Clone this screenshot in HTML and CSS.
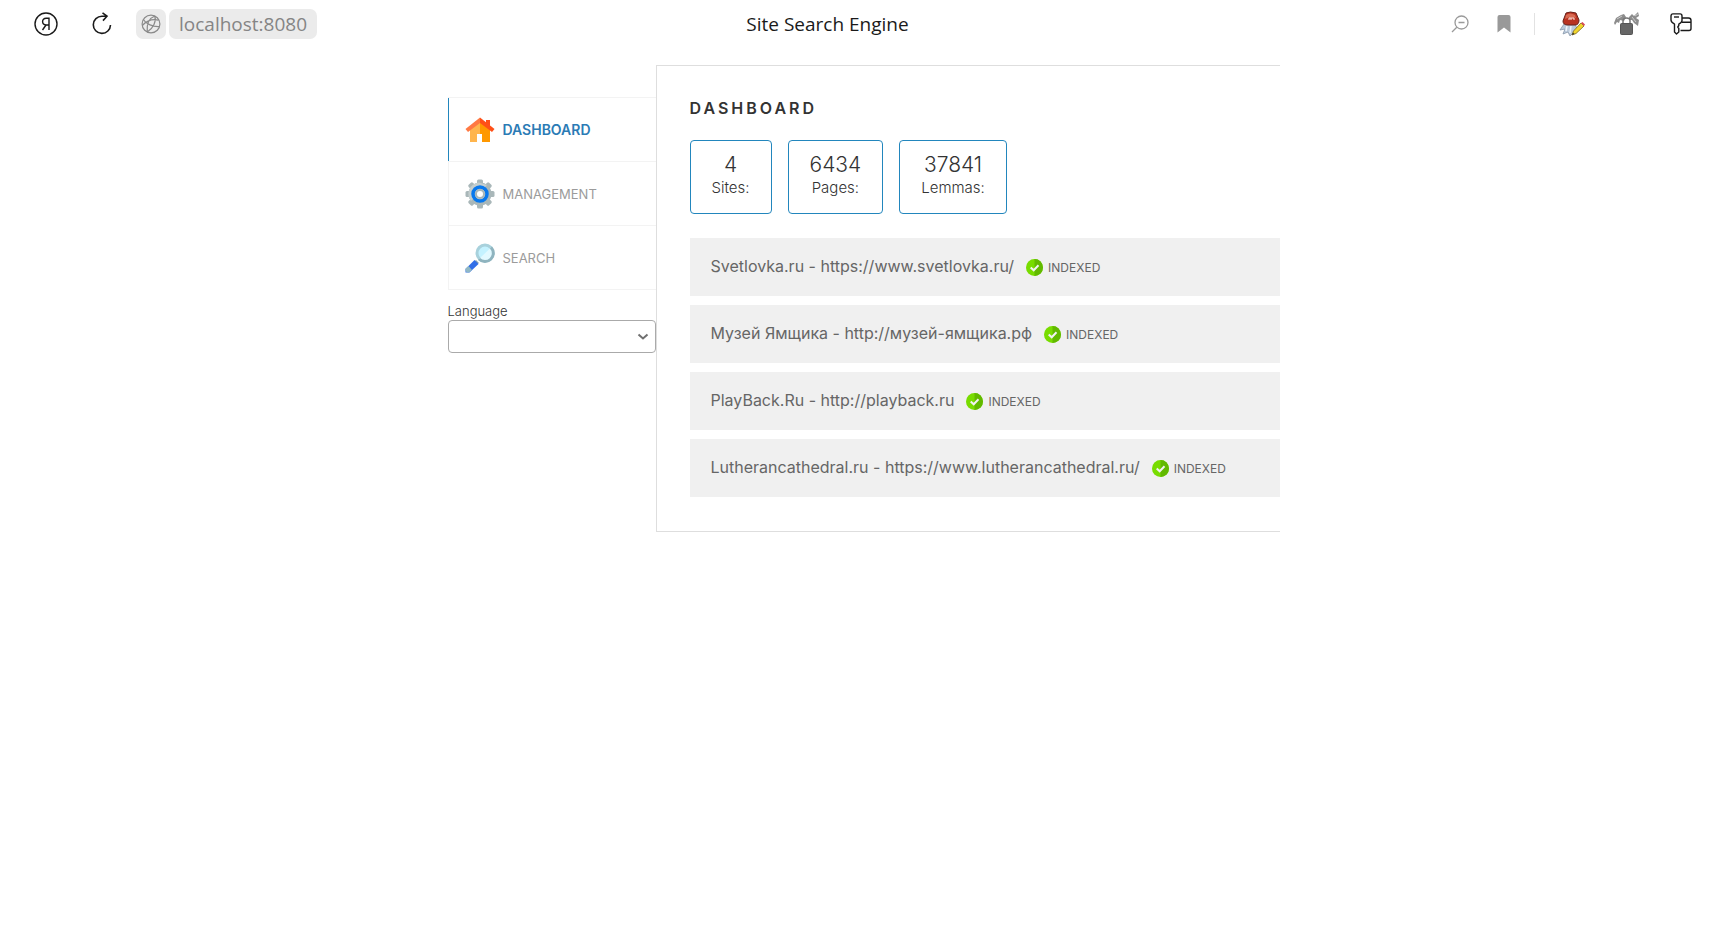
FILE: index.html
```html
<!DOCTYPE html>
<html lang="en">
<head>
<meta charset="utf-8">
<title>Site Search Engine</title>
<link rel="stylesheet" href="styles.css">
</head>
<body>
<header class="bar">
  <div class="bar-side">
    <button class="tool" aria-label="Home">
      <svg width="24" height="24" viewBox="0 0 24 24" fill="none" stroke="#1a1a1a" stroke-width="1.4"><circle cx="12" cy="12" r="11"/><path d="M15 18V6.200H12.200C9.800 6.200 8.600 7.700 8.600 9.600C8.600 11.600 9.900 13 12.200 13H15M12 13L8.500 18"/></svg>
    </button>
    <button class="tool tool-reload" aria-label="Reload">
      <svg width="20" height="24" viewBox="0 0 20 24" fill="none" stroke="#1a1a1a" stroke-width="1.600"><path d="M14.500 4.200H10A8.600 8.600 0 1 0 18.500 13M10.500 .8L15 4.200L11 8.600"/></svg>
    </button>
    <div class="address">
      <button class="site-info" aria-label="Site information">
        <svg width="20" height="20" viewBox="0 0 20 20" fill="none" stroke="#8a8a8a" stroke-width="1.200"><circle cx="10" cy="10" r="8.900"/><path d="M13.800 2C8.500 4 5.500 10 6.200 18M13.800 2C15.500 7 12.500 14.500 6.200 18M2.300 5.500C5 10 12 13 18.500 12.500M1.300 11.500C6 6.500 12.500 5 17.500 6.200"/></svg>
      </button>
      <button class="url">localhost:8080</button>
    </div>
  </div>
  <div class="bar-title">Site Search Engine</div>
  <div class="bar-side bar-right">
    <button class="tool" aria-label="Zoom out">
      <svg width="18" height="18" viewBox="0 0 18 18" fill="none" stroke="#9a9a9a" stroke-width="1.300"><circle cx="10.500" cy="7.500" r="6.500"/><path d="M1 17L5.800 12.200M7.500 7.500H13.500"/></svg>
    </button>
    <button class="tool tool-mark" aria-label="Bookmark">
      <svg width="14" height="18" viewBox="0 0 14 18" fill="#999"><path d="M2.500 0H11.500Q13.500 0 13.500 2V17.500L7 12.500L.5 17.500V2Q.5 0 2.500 0Z"/></svg>
    </button>
    <span class="divider"></span>
    <button class="tool tool-ext" aria-label="Editor extension">
      <svg width="26" height="26" viewBox="0 0 26 26"><path d="M5 13L1 19L6 18L4 23L9 21L11 25L15 21L19 20L16 13Z" fill="#bccbdc" stroke="#8595aa" stroke-width=".8"/><path d="M8 15L7 20M12 15L11 22" stroke="#eef4fa" stroke-width="1.500"/><path d="M7 2Q11 0 17 2L20 9Q20 14 16 14H9Q4 14 4 10Z" fill="#b83322" stroke="#67221b"/><path d="M7 4Q11 1 16 4L17 7Q11 5 6 8Z" fill="#d76a52"/><path d="M10 9V7H15V9M12 7V9" stroke="#ffe4dc" fill="none"/><path d="M13 24L14.500 20L22 12L25 15L17 22.500Z" fill="#f2d62b" stroke="#7b661b" stroke-width=".8"/><path d="M22 12L23.500 11L26 13.500L25 15Z" fill="#db4957"/><path d="M13 24L14 21.500L15.500 23Z" fill="#333"/></svg>
    </button>
    <button class="tool tool-lock" aria-label="Lock extension">
      <svg width="26" height="24" viewBox="0 0 26 24"><path d="M0 11L2 6L7 3L10 2L12 5L10 9L6 8L5 11L3 10L1 13ZM15 5L18 2L20 4L24 0L25 4L22 6L25 8L24 14L20 11L18 8L15 8Z" fill="#8d8d8d"/><path d="M3 7L8 4M18 5L22 10M21 4L24 2" stroke="#ccc"/><path d="M9 12V9Q9 6 12.500 6Q16 6 16 9V12" fill="none" stroke="#777" stroke-width="1.500"/><rect x="6.500" y="11.500" width="12" height="11" rx="1" fill="#666" stroke="#555"/></svg>
    </button>
    <button class="tool tool-key" aria-label="Passwords">
      <svg width="22" height="22" viewBox="0 0 22 22" fill="none" stroke="#1a1a1a" stroke-width="1.400" stroke-linejoin="round"><path d="M12 5H18.500Q21 5 21 7.500V15.500Q21 17.500 19 17.500H10.500M12 9.200H21"/><path d="M3 .9H10Q12 .9 12 3V7.500Q12 9.500 8.800 11.200V12.500L7.800 14L8.800 15.500V19L6.500 21L4.500 19V11.200Q1 9 1 7V3Q1 .9 3 .9Z" fill="#fff"/><path d="M4 4H9"/></svg>
    </button>
  </div>
</header>

<div class="page">
  <aside class="sidebar">
    <nav class="menu">
      <a class="menu-item menu-item-active" href="#dashboard">
        <svg width="30" height="30" viewBox="0 0 30 30"><path d="M5 14V27H12V19H15V6Z" fill="#ffb54d"/><path d="M15 6V19H17V27H25V14Z" fill="#ff9800"/><path d="M21 9V5H25V12Z" fill="#ff5018"/><path d="M15 2.500L.5 14L3 17L15 8Z" fill="#ff7943"/><path d="M15 2.500L29.500 14L27 17L15 8Z" fill="#ff5018"/><path d="M12 19H17V27H12Z" fill="#fff"/></svg>
        DASHBOARD
      </a>
      <a class="menu-item" href="#management">
        <svg width="30" height="30" viewBox="0 0 30 30"><g fill="#a9b7b9"><circle cx="15" cy="15" r="11.500"/><g id="teeth"><rect x="12" y=".5" width="6" height="29" rx="1.500"/><rect x=".5" y="12" width="29" height="6" rx="1.500"/></g><use href="#teeth" transform="rotate(45 15 15)"/></g><path d="M4 11Q7 4 14 3.500L22 6L6 22Q2 17 4 11Z" fill="#c4cece"/><circle cx="15" cy="15" r="7" fill="#c7d0d0" stroke="#0878ed" stroke-width="3.500"/><circle cx="15" cy="15" r="4" fill="#fff" stroke="#a7b5b8" stroke-width="2"/></svg>
        MANAGEMENT
      </a>
      <a class="menu-item" href="#search">
        <svg width="30" height="30" viewBox="0 0 30 30"><path d="M11 17L14 20L11.500 21.500L9 19Z" fill="#8aa4ae"/><path d="M.5 26L9.500 17L13.500 21L4.500 29.500H.5Z" fill="#316ee7"/><path d="M.5 25.500L3.500 23L7 27L4 29.500Q0 30 .5 25.500Z" fill="#90b8c5"/><circle cx="20" cy="10" r="8" fill="#c4f2ff" stroke="#a8d1dc" stroke-width="3"/><path d="M26 4.500A8 8 0 0 1 14 16" fill="#e2f9ff" stroke="#8fb4bf" stroke-width="3"/></svg>
        SEARCH
      </a>
    </nav>
    <label class="lang-label" for="lang">Language</label>
    <div class="lang">
      <select class="lang-select" id="lang"><option value=""></option></select>
      <svg class="lang-arrow" width="12" height="8" viewBox="0 0 12 8" fill="none" stroke="#707070" stroke-width="2"><path d="M1.500 1.500L6 5.500L10.500 1.500"/></svg>
    </div>
  </aside>
  <main class="main">
    <h1 class="heading">DASHBOARD</h1>
    <div class="stats">
      <div class="stat"><div class="stat-value">4</div><div class="stat-name">Sites:</div></div>
      <div class="stat"><div class="stat-value">6434</div><div class="stat-name">Pages:</div></div>
      <div class="stat"><div class="stat-value">37841</div><div class="stat-name">Lemmas:</div></div>
    </div>
    <svg width="0" height="0" aria-hidden="true"><symbol id="ok" viewBox="0 0 17 17"><circle cx="8.500" cy="8.500" r="8.500" fill="#78dc00"/><path d="M8.500 0A8.500 8.500 0 0 1 8.500 17Z" fill="#62b900"/><path d="M4.700 8.500L7.700 11.300L12.500 6.300" fill="none" stroke="#f2f2f2" stroke-width="2"/></symbol></svg>
    <div class="sites">
      <button class="site">Svetlovka.ru - https://www.svetlovka.ru/<span class="status"><svg width="17" height="17"><use href="#ok"/></svg>INDEXED</span></button>
      <button class="site">Музей Ямщика - http://музей-ямщика.рф<span class="status"><svg width="17" height="17"><use href="#ok"/></svg>INDEXED</span></button>
      <button class="site">PlayBack.Ru - http://playback.ru<span class="status"><svg width="17" height="17"><use href="#ok"/></svg>INDEXED</span></button>
      <button class="site">Lutherancathedral.ru - https://www.lutherancathedral.ru/<span class="status"><svg width="17" height="17"><use href="#ok"/></svg>INDEXED</span></button>
    </div>
  </main>
</div>
</body>
</html>
```
FILE: styles.css
```css
* { box-sizing: border-box; }
body { margin: 0; background: #fff; color: #333; font-family: Inter, "Open Sans", sans-serif; }
button { border: 0; background: none; padding: 0; font: inherit; color: inherit; }
svg { display: block; flex: none; }

.bar { display: grid; grid-template-columns: 1fr auto 1fr; align-items: center; height: 46px; padding: 1px 31px 0 34px; font: 19px "Open Sans", "Noto Sans", sans-serif; }
.bar-side { display: flex; align-items: center; }
.bar-right { justify-content: flex-end; }
.bar-title { margin-right: 71px; color: #1a1a1a; }
.tool-reload { margin-left: 34px; }
.address { display: flex; gap: 3px; margin-left: 24px; }
.site-info, .url { height: 30px; border-radius: 7px; background: #ebebeb; }
.site-info { display: grid; place-items: center; width: 30px; }
.url { padding: 0 10px; color: #858585; }
.tool-mark { margin-left: 28px; }
.divider { width: 1px; height: 22px; margin: 0 24px 0 23px; background: #e2e2e2; }
.tool-lock { margin-left: 29px; }
.tool-key { margin-left: 30px; }

.page { display: flex; align-items: flex-start; max-width: 836px; margin: 19px auto 0; padding-left: 4px; }
.sidebar { flex: 0 0 25%; padding-top: 32px; }
.menu { border: 1px solid #f3f3f3; border-right: 0; }
.menu-item { display: flex; align-items: center; gap: 8px; height: 63px; padding-left: 16px; color: #9b9b9b; font-size: 13px; text-decoration: none; }
.menu-item + .menu-item { height: 64px; border-top: 1px solid #f3f3f3; }
.menu-item-active { margin-left: -1px; border-left: 1px solid #2286bd; color: #2b7bb5; font-size: 14px; font-weight: 600; }
.lang-label { display: block; margin-top: 12px; font-size: 13px; line-height: 18px; font-weight: 300; }
.lang { position: relative; }
.lang-select { display: block; width: 100%; height: 33px; appearance: none; border: 1px solid #aaa; border-radius: 4px; background: #fff; }
.lang-arrow { position: absolute; right: 7px; top: 13px; pointer-events: none; }

.main { flex: 1; min-width: 0; padding: 33px 0 34px 33px; border: 1px solid #dedede; border-right: 0; }
.heading { margin: 0; font-size: 16px; line-height: 18px; font-weight: 600; letter-spacing: 3px; }
.stats { display: flex; gap: 16px; margin-top: 23px; }
.stat { height: 74px; padding: 11px 21px; border: 1px solid #2286bd; border-radius: 4px; text-align: center; font-weight: 300; }
.stat-value { font-size: 21px; line-height: 26px; }
.stat-name { font-size: 15px; line-height: 20px; }
.sites { display: grid; gap: 9px; margin-top: 24px; }
.site { display: flex; align-items: center; height: 58px; padding: 0 21px 2px; background: #f0f0f0; color: #666; font-size: 16px; text-align: left; }
.status { display: flex; align-items: center; gap: 5px; margin-left: 12px; padding-top: 2px; font-size: 12px; }
```
